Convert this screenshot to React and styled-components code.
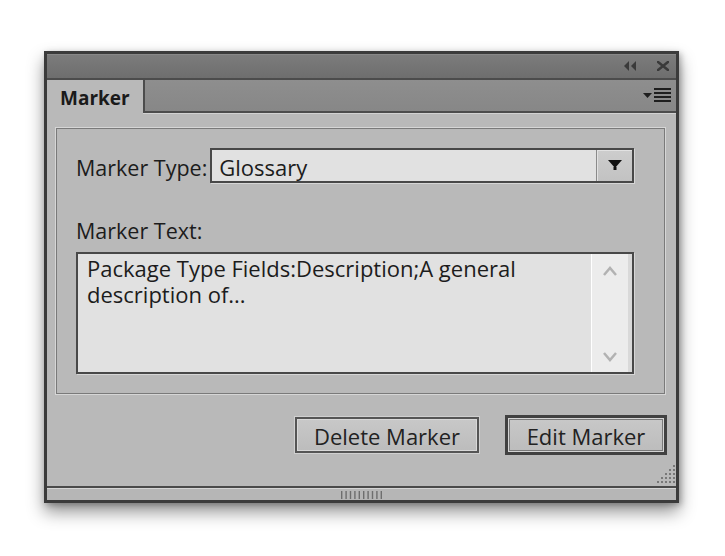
import React from 'react';
import styled, {createGlobalStyle} from 'styled-components';

const GlobalStyle = createGlobalStyle`
  html, body {
    margin: 0;
    padding: 0;
    background: #ffffff;
  }
  body {
    font-family: "Open Sans", "Liberation Sans", sans-serif;
    color: #1c1c1c;
  }
`;

const Page = styled.div`
  padding: 51px 0 0 44px;
  height: 556px;
  box-sizing: border-box;
`;

const Window = styled.div`
  width: 635px;
  height: 452px;
  box-sizing: border-box;
  border: 3px solid #3b3b3b;
  background: #b9b9b9;
  display: flex;
  flex-direction: column;
  box-shadow: 0 9px 16px rgba(0, 0, 0, 0.42), 2px 2px 6px rgba(0, 0, 0, 0.25);
`;

const TitleBar = styled.div`
  height: 24px;
  flex: none;
  border-bottom: 2px solid #4c4c4c;
  background: linear-gradient(#7c7c7c, #6e6e6e);
  box-shadow: inset 0 1px 0 #888888;
  display: flex;
  justify-content: flex-end;
  align-items: center;
  gap: 20px;
  padding-right: 7px;
`;

const TabRow = styled.div`
  height: 33px;
  flex: none;
  display: flex;
`;

const Tab = styled.div`
  width: 96px;
  box-sizing: border-box;
  padding: 5px 0 0 13px;
  font-size: 19px;
  font-weight: 700;
  color: #1a1a1a;
  background: #b9b9b9;
`;

const TabStrip = styled.div`
  flex: 1;
  background: linear-gradient(#8e8e8e, #878787);
  border-left: 2px solid #4c4c4c;
  border-bottom: 2px solid #4c4c4c;
  box-shadow: 0 1px 0 #d2d2d2;
  display: flex;
  justify-content: flex-end;
  align-items: center;
  padding-right: 5px;
`;

const Content = styled.div`
  flex: 1;
  position: relative;
  padding: 15px 11px 0 9px;
`;

const GroupBox = styled.div`
  border: 1px solid #7a7a7a;
  box-shadow: 0 0 0 1px #d6d6d6;
  padding: 19px 30px 19px 19px;
`;

const FieldRow = styled.div`
  display: flex;
  align-items: center;
  height: 35px;
`;

const Label = styled.div`
  font-size: 21.5px;
  line-height: 30px;
  padding-top: ${p => p.$shift || 0}px;
  margin-top: ${p => p.$top || 0}px;
  margin-bottom: ${p => p.$bottom || 0}px;
  white-space: nowrap;
`;

const Select = styled.div`
  flex: 1;
  height: 35px;
  margin-left: 3px;
  box-sizing: border-box;
  border: 2px solid #484848;
  background: #e1e1e1;
  box-shadow: 1px 1px 0 #d6d6d6;
  display: flex;
`;

const SelectValue = styled.div`
  flex: 1;
  font-size: 22px;
  line-height: 30px;
  padding: 2px 0 0 7px;
`;

const SelectButton = styled.div`
  width: 35px;
  border-left: 1px solid #8a8a8a;
  background: linear-gradient(#cdcdcd, #c2c2c2);
  box-shadow: inset 1px 1px 0 #e2e2e2;
  display: flex;
  align-items: center;
  justify-content: center;
`;

const TextBox = styled.div`
  height: 122px;
  box-sizing: border-box;
  border: 2px solid #484848;
  background: #e1e1e1;
  box-shadow: 1px 1px 0 #d6d6d6;
  display: flex;
`;

const TextBody = styled.div`
  flex: 1;
  font-size: 22px;
  line-height: 26px;
  padding: 1px 0 0 9px;
`;

const ScrollTrack = styled.div`
  width: 36px;
  border-left: 1px solid #ffffff;
  border-right: 4px solid #d9d9d9;
  background: #ececec;
  display: flex;
  flex-direction: column;
  justify-content: space-between;
  align-items: center;
  padding: 12px 0 10px;
`;

const ButtonRow = styled.div`
  display: flex;
  justify-content: flex-end;
  align-items: center;
  gap: 26px;
  margin: 21px -2px 0 0;
`;

const Button = styled.div`
  box-sizing: border-box;
  width: ${p => p.$width}px;
  height: ${p => (p.$primary ? 40 : 36)}px;
  border: ${p => (p.$primary ? '3px solid #414141' : '2px solid #555555')};
  background: linear-gradient(#c8c8c8, #bcbcbc);
  box-shadow: ${p => (p.$primary
    ? 'inset 0 0 0 1px #d4d4d4, inset 0 0 0 2px #7a7a7a'
    : 'inset 0 0 0 1px #d8d8d8, 0 0 0 1px #d0d0d0')};
  font-size: 22px;
  line-height: 30px;
  color: #222222;
  display: flex;
  align-items: center;
  justify-content: center;
  padding-top: 2px;
`;

const Grip = styled.svg`
  position: absolute;
  right: 1px;
  bottom: 3px;
`;

const BottomBar = styled.div`
  height: 11px;
  flex: none;
  border-top: 2px solid #4a4a4a;
  box-shadow: inset 0 1px 0 #d4d4d4;
  background: #b6b6b6;
  display: flex;
  justify-content: center;
  align-items: center;
  padding-top: 1px;
`;

const CollapseIcon = () => (
  <svg width="14" height="10" viewBox="0 0 14 10">
    <polygon points="6,0 6,10 1,5" fill="#3a3a3a" />
    <polygon points="13,0 13,10 8,5" fill="#3a3a3a" />
  </svg>
);

const CloseIcon = () => (
  <svg width="12" height="10" viewBox="0 0 12 10">
    <path d="M1 1 L11 9 M11 1 L1 9" stroke="#3a3a3a" strokeWidth="2.6" strokeLinecap="square" />
  </svg>
);

const MenuIcon = () => (
  <svg width="28" height="16" viewBox="0 0 28 16">
    <polygon points="0,5 9,5 4.5,10" fill="#1e1e1e" />
    <rect x="11" y="0" width="17" height="2" fill="#1e1e1e" />
    <rect x="11" y="4" width="17" height="2" fill="#1e1e1e" />
    <rect x="11" y="8" width="17" height="2" fill="#1e1e1e" />
    <rect x="11" y="12" width="17" height="2" fill="#1e1e1e" />
  </svg>
);

const DropArrow = () => (
  <svg width="14" height="11" viewBox="0 0 14 11">
    <polygon points="0,0 14,0 7,8" fill="#111111" />
    <rect x="5.5" y="7" width="3" height="3" fill="#111111" />
  </svg>
);

const Chevron = ({down}) => (
  <svg width="14" height="11" viewBox="0 0 14 11">
    <path d={down ? 'M1 2 L7 9 L13 2' : 'M1 9 L7 2 L13 9'} fill="none" stroke="#b2b2b2" strokeWidth="2.5" />
  </svg>
);

const GripDots = () => {
  const dots = [];
  for (let r = 0; r < 5; r++) {
    for (let c = 4 - r; c < 5; c++) {
      dots.push(<rect key={`${r}-${c}`} x={c * 4} y={r * 4} width="2" height="2" fill="#787878" />);
    }
  }
  return (
    <Grip width="18" height="18" viewBox="0 0 18 18">
      {dots}
    </Grip>
  );
};

const Handle = () => (
  <svg width="41" height="8" viewBox="0 0 41 8">
    {Array.from({length: 10}).map((_, i) => (
      <rect key={i} x={i * 4.4} y="0" width="1.4" height="8" fill="#6e6e6e" />
    ))}
  </svg>
);

const App = () => (
  <Page>
    <GlobalStyle />
    <Window>
      <TitleBar>
        <CollapseIcon />
        <CloseIcon />
      </TitleBar>
      <TabRow>
        <Tab>Marker</Tab>
        <TabStrip>
          <MenuIcon />
        </TabStrip>
      </TabRow>
      <Content>
        <GroupBox>
          <FieldRow>
            <Label $shift={4}>Marker Type:</Label>
            <Select>
              <SelectValue>Glossary</SelectValue>
              <SelectButton>
                <DropArrow />
              </SelectButton>
            </Select>
          </FieldRow>
          <Label $top={33} $bottom={6}>Marker Text:</Label>
          <TextBox>
            <TextBody>
              Package Type Fields:Description;A general
              <br />
              description of...
            </TextBody>
            <ScrollTrack>
              <Chevron />
              <Chevron down />
            </ScrollTrack>
          </TextBox>
        </GroupBox>
        <ButtonRow>
          <Button $width={184}>Delete Marker</Button>
          <Button $width={162} $primary>Edit Marker</Button>
        </ButtonRow>
        <GripDots />
      </Content>
      <BottomBar>
        <Handle />
      </BottomBar>
    </Window>
  </Page>
);

export default App;
